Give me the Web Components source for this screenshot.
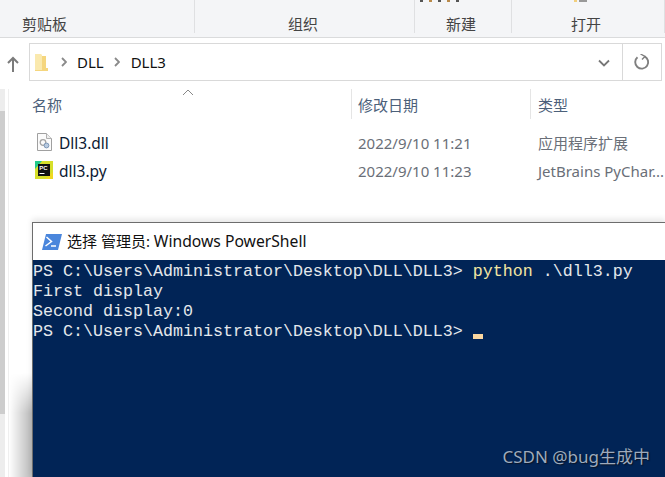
<!DOCTYPE html>
<html><head><meta charset="utf-8"><style>
html,body{margin:0;padding:0;height:100%;overflow:hidden;background:#fff}
body{font-family:"Noto Sans","Noto Sans CJK SC",sans-serif;display:flex;flex-direction:column;height:477px}
</style></head><body>
<x-ribbon></x-ribbon>
<x-address></x-address>
<x-files>
<x-term slot="term"></x-term>
</x-files>
<script>
const CJK='"Noto Sans","Noto Sans CJK SC",sans-serif';
class Base extends HTMLElement{
  constructor(){super();this.attachShadow({mode:'open'}).innerHTML=this.constructor.html;}
}
class Ribbon extends Base{static html=`<style>
:host{display:flex;height:37px;background:#f4f5f7;border-bottom:1px solid #dadbdc;font:15px/1 ${CJK};color:#444;flex:none;align-items:flex-start}
.g{position:relative;display:flex;justify-content:center;align-items:flex-end;height:33px;box-sizing:content-box;border-right:1px solid #dfe0e2}
.g>.l{display:block;padding-bottom:1px}
.a{width:172px;justify-content:flex-start;padding-left:22px}
.b{width:216px;padding-right:3px}.c{width:92px;padding-right:4px}.d{width:148px;padding-right:4px}
.frag{position:absolute;left:5px;top:0;display:flex;gap:6px}
.frag i{display:block;width:3px;height:2px;background:#555}
.frag i:nth-child(2n){background:#b98a4a}
.y{position:absolute;left:62px;top:0;width:3px;height:2px;background:#f2cf7c}
.z{position:absolute;left:67px;top:0;width:8px;height:2px;background:#999}
</style>
<div class="g a"><span class="l">剪贴板</span></div><div class="g b"><span class="l">组织</span></div>
<div class="g c"><span class="frag"><i></i><i></i><i></i><i></i><i></i></span><span class="l">新建</span></div>
<div class="g d"><span class="y"></span><span class="z"></span><span class="l">打开</span></div>`}
class Address extends Base{static html=`<style>
:host{display:flex;height:38px;margin-top:5px;flex:none;align-items:stretch}
.up{width:25px;padding-right:4px;display:flex;align-items:center;justify-content:center}
.bar{width:633px;box-sizing:border-box;border:1px solid #d9d9d9;display:flex;align-items:center;font:15px/1 ${CJK};color:#111;background:#fff}
.path{flex:1;display:flex;align-items:center;padding-left:5px}
.sep{margin:0 10px 0 13px;display:flex}
.folder{display:flex}
.r{width:38px;height:100%;border-left:1px solid #d9d9d9;display:flex;align-items:center;justify-content:center;margin-left:12px}
.chev{display:flex;margin-top:2px}
svg{display:block}
</style>
<div class="up"><svg width="12" height="16" viewBox="0 0 12 16" style="margin-top:3px"><path d="M6 16V2M1 7l5-5 5 5" fill="none" stroke="#7b7b7b" stroke-width="2"/></svg></div>
<div class="bar"><div class="path">
<span class="folder"><svg width="13" height="17" viewBox="0 0 13 17"><path d="M0 0h6l1 1v15H0z" fill="#fae9ae"/><path d="M7 2h4v12h2v3H0v-1h7z" fill="#f5d67e"/></svg></span>
<span class="sep"><svg width="6" height="10" viewBox="0 0 6 10"><path d="M1 1l4 4-4 4" fill="none" stroke="#8a8a8a" stroke-width="1.800"/></svg></span>
<span>DLL</span>
<span class="sep" style="margin:0 11px 0 10px"><svg width="6" height="10" viewBox="0 0 6 10"><path d="M1 1l4 4-4 4" fill="none" stroke="#8a8a8a" stroke-width="1.800"/></svg></span>
<span>DLL3</span></div>
<span class="chev"><svg width="12" height="8" viewBox="0 0 12 8"><path d="M1 1.500 6 6.500l5-5" fill="none" stroke="#777" stroke-width="1.800"/></svg></span>
<div class="r"><svg width="16" height="16" viewBox="0 0 16 16"><path d="M10.500 2.300A6.500 6.500 0 1 1 3.500 3.200" fill="none" stroke="#7f7f7f" stroke-width="1.900"/><path d="M6.500 0l4.500 2.400L8 5.500" fill="none" stroke="#7f7f7f" stroke-width="1.400"/></svg></div>
</div>`}
class Files extends Base{static html=`<style>
:host{display:flex;flex:1;min-height:0;position:relative;padding-top:8px;font:15px/1 ${CJK}}
.track{width:5px;background:#ededed;display:flex;flex-direction:column;flex:none}
.track i{display:block;margin-top:22px;height:303px;background:#cdcdcd}
.main{flex:1;min-width:0;display:flex;flex-direction:column;margin-left:3px;border-left:1px solid #efefef}
.head{display:grid;grid-template-columns:342px 179px 1fr;height:30px;position:relative;color:#4c607a}
.head div{display:flex;align-items:center;padding-left:6px;border-left:1px solid #e5e5e5;padding-top:3px}
.head div:nth-of-type(1){border-left:0;padding-left:23px}
.head div:nth-of-type(3){padding-left:7px}
.caret{position:absolute;left:173px;top:0}
.row{display:grid;grid-template-columns:323px 180px 1fr;height:28px;align-items:center;padding-left:26px;color:#15233d}
.row.first{margin-top:10px}
.n{display:flex;align-items:center;gap:6px;color:#0d1a33;font-size:15.500px;padding-top:1px}
.ic{width:18px;display:flex;justify-content:center;margin-top:-4px}
.n svg{flex:none;display:block}
.dim{color:#6a6f78}
.row span{white-space:nowrap}
.files{flex:1}
::slotted(*){margin-left:23px}
</style>
<div class="track"><i></i></div>
<div class="main">
<div class="head"><svg class="caret" width="12" height="7" viewBox="0 0 12 7"><path d="M1 6l5-5 5 5" fill="none" stroke="#888" stroke-width="1"/></svg><div>名称</div><div>修改日期</div><div>类型</div></div>
<div class="files">
<div class="row first"><span class="n"><span class="ic"><svg width="15" height="18" viewBox="0 0 15 18"><path d="M.5.500h9l5 5v12H.5z" fill="#fbfbfb" stroke="#a0a0a0"/><path d="M9.500.500v5h5" fill="#eee" stroke="#b0b0b0"/><circle cx="6" cy="9.500" r="2.800" fill="none" stroke="#a5a5a5" stroke-width="1.300"/><circle cx="9.500" cy="12.500" r="2.400" fill="#b9cbe0" stroke="#7d97b8"/></svg></span>Dll3.dll</span><span class="dim">2022/9/10 11:21</span><span class="dim">应用程序扩展</span></div>
<div class="row"><span class="n"><span class="ic"><svg width="18" height="18" viewBox="0 0 18 18"><rect width="18" height="18" fill="#d6df2a"/><path d="M0 0h7L0 8z" fill="#22c98c"/><path d="M18 18h-8l8-7z" fill="#f0d820"/><rect x="3" y="3" width="12" height="12" fill="#111"/><text x="4.200" y="9" font-family="Liberation Sans" font-weight="700" font-size="6" fill="#fff">PC</text><rect x="4.500" y="12" width="5" height="1" fill="#fff"/></svg></span>dll3.py</span><span class="dim">2022/9/10 11:23</span><span class="dim">JetBrains PyChar...</span></div>
</div>
<slot name="term"></slot>
</div>`}
class Term extends Base{static html=`<style>
:host{display:flex;flex-direction:column;height:255px;flex:none;box-sizing:border-box;border:1px solid #6d6d6d;border-right:0;border-bottom:0;box-shadow:0 -3px 6px rgba(0,0,0,.1);background:#012456;position:relative}
:host::before{content:"";position:absolute;left:-24px;width:23px;top:150px;bottom:0;background:linear-gradient(to right,rgba(0,0,0,0),rgba(0,0,0,.28));-webkit-mask-image:linear-gradient(to bottom,transparent,#000 40px)}
.t{height:37px;background:#fff;display:flex;align-items:center;padding-left:9px;gap:5px;font:15px/1 ${CJK};color:#111;flex:none}
.t b{font-weight:400;font-size:15.700px}
.c{flex:1;font:16.670px/20px "Liberation Mono",monospace;color:#e4e8ec;white-space:pre;padding-top:2px;position:relative}
.c div{height:20px}
.y{color:#f3e6a2}
.cur{display:inline-block;width:10px;height:5px;background:#fbd7a0;vertical-align:-3px}
.wm{position:absolute;right:15px;bottom:12px;font:17px/1 ${CJK};color:#9eabbc;text-shadow:1px 1px 1px #0b1426}
svg{display:block}
</style>
<div class="t"><svg width="20" height="16" viewBox="0 0 20 16"><path d="M4 0h16l-4 16H0z" fill="#4a86dc"/><path d="M4.500 3l5 4.500L3.500 12" fill="none" stroke="#fff" stroke-width="1.500"/><path d="M9 12h5" stroke="#fff" stroke-width="1.500"/></svg><span>选择 管理员: <b>Windows PowerShell</b></span></div>
<div class="c"><div>PS C:\\Users\\Administrator\\Desktop\\DLL\\DLL3&gt; <span class="y">python</span> .\\dll3.py</div><div>First display</div><div>Second display:0</div><div>PS C:\\Users\\Administrator\\Desktop\\DLL\\DLL3&gt; <span class="cur"></span></div><span class="wm">CSDN @bug生成中</span></div>`}
customElements.define('x-ribbon',Ribbon);
customElements.define('x-address',Address);
customElements.define('x-files',Files);
customElements.define('x-term',Term);
</script>
</body></html>
